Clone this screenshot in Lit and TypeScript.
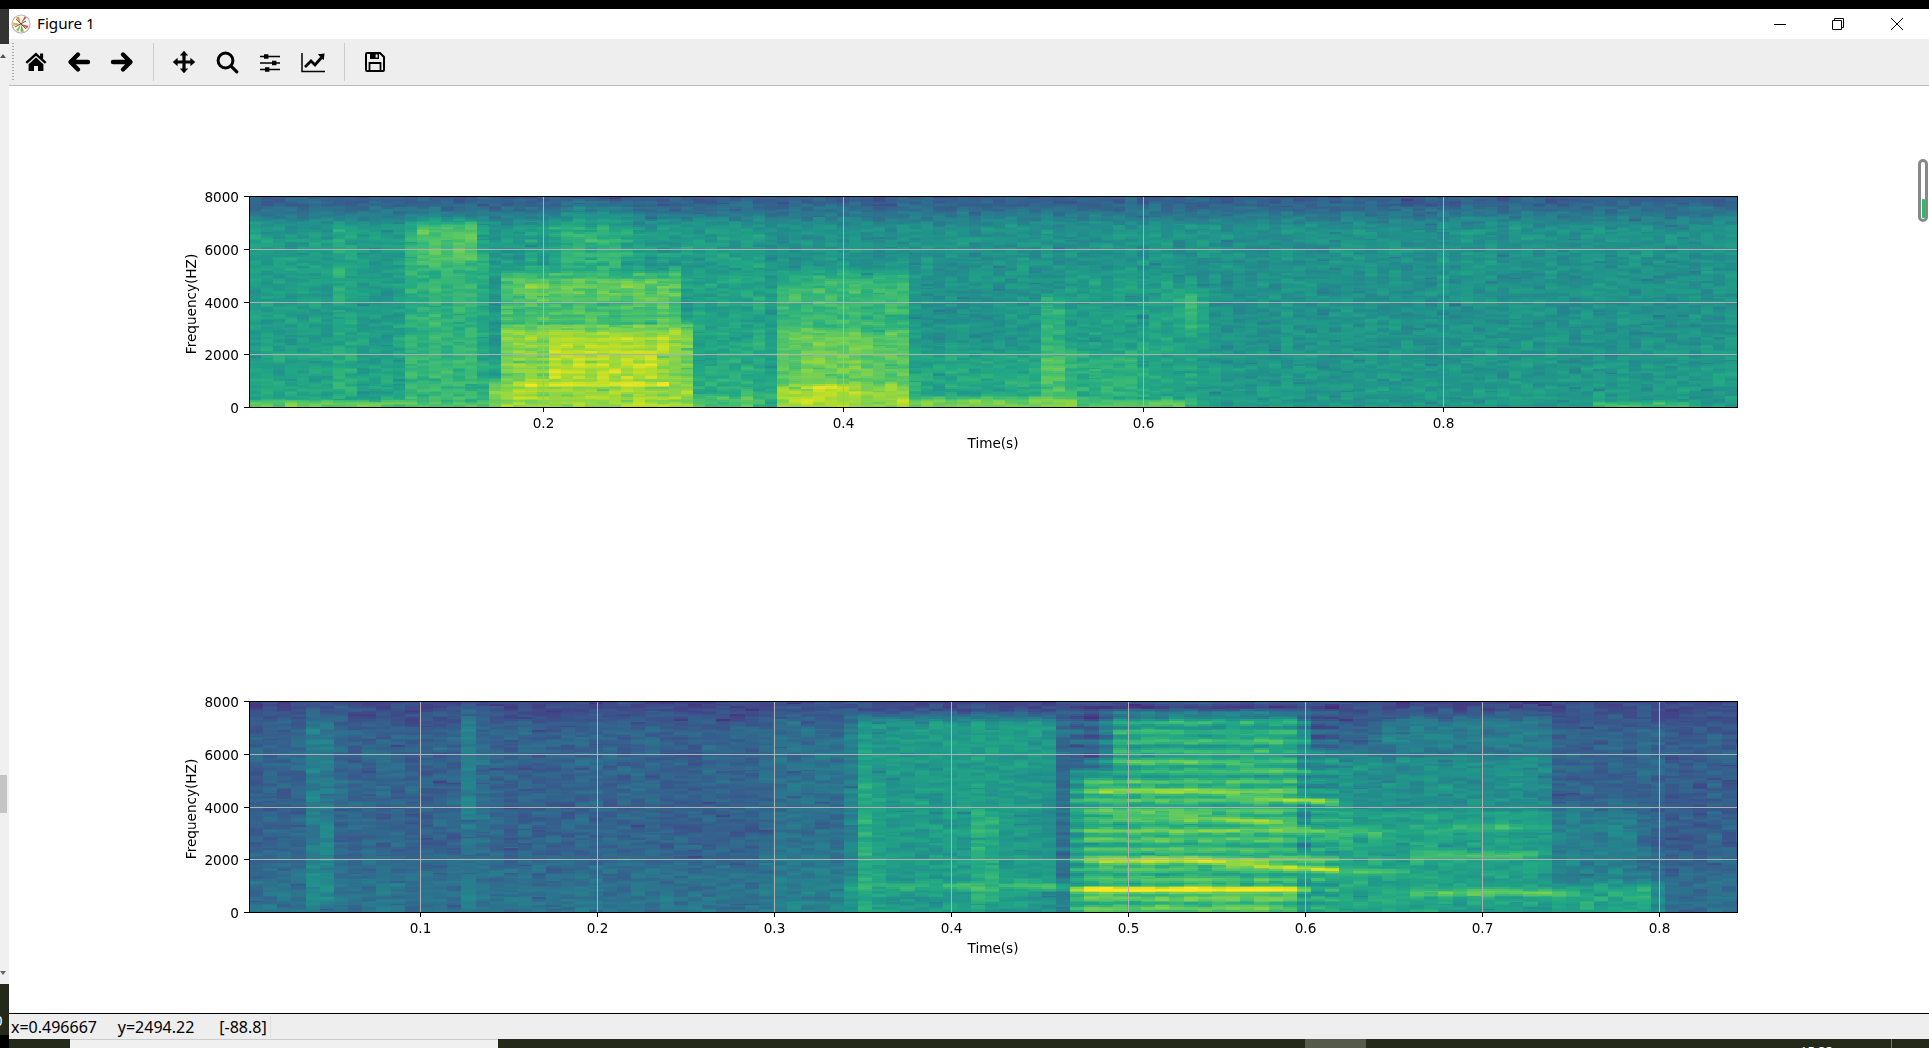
import { LitElement, css, html, svg } from "lit";
import { customElement, property } from "lit/decorators.js";

interface Region {
  t: [number, number];
  f: [number, number];
  add?: number;
  to?: number;
}

interface Band {
  t: [number, number];
  f: number;
  w: number;
  to: number;
  bend?: number;
}

interface PlotSpec {
  seed: number;
  base: number;
  top: number;
  low: number;
  colWidth: number;
  columns: number;
  xScale: number;
  xOffset: number;
  xTicks: number[];
  regions: Region[];
  bands: Band[];
  ripple: { t: [number, number]; period: number; amp: number };
}

const PLOT_A: PlotSpec = {
  seed: 11,
  base: 0.51,
  top: 0.21,
  low: 0.03,
  colWidth: 12,
  columns: 125,
  xScale: 1500,
  xOffset: -6,
  xTicks: [0.2, 0.4, 0.6, 0.8],
  regions: [
    { t: [0.0, 0.35], f: [0, 7000], add: 0.04 },
    { t: [0.062, 0.072], f: [300, 7200], add: 0.09 },
    { t: [0.108, 0.16], f: [0, 7300], add: 0.09 },
    { t: [0.115, 0.155], f: [5400, 7000], add: 0.09 },
    { t: [0.21, 0.255], f: [4500, 7800], add: 0.1 },
    { t: [0.172, 0.292], f: [0, 5200], to: 0.7 },
    { t: [0.18, 0.292], f: [3900, 5000], to: 0.76 },
    { t: [0.172, 0.3], f: [500, 3200], to: 0.82 },
    { t: [0.2, 0.285], f: [800, 3000], to: 0.89 },
    { t: [0.164, 0.3], f: [0, 1000], to: 0.85 },
    { t: [0.18, 0.29], f: [600, 1100], to: 0.94 },
    { t: [0.292, 0.345], f: [0, 500], to: 0.68 },
    { t: [0.355, 0.445], f: [0, 5100], to: 0.67 },
    { t: [0.355, 0.445], f: [0, 3100], to: 0.75 },
    { t: [0.365, 0.42], f: [1000, 2200], to: 0.79 },
    { t: [0.355, 0.445], f: [0, 1000], to: 0.86 },
    { t: [0.37, 0.41], f: [550, 900], to: 0.93 },
    { t: [0.445, 0.56], f: [0, 320], to: 0.78 },
    { t: [0.56, 0.63], f: [0, 220], to: 0.68 },
    { t: [0.445, 0.6], f: [400, 2100], add: 0.06 },
    { t: [0.532, 0.548], f: [300, 4200], add: 0.15 },
    { t: [0.55, 0.64], f: [0, 5000], add: 0.05 },
    { t: [0.625, 0.64], f: [2700, 4300], add: 0.11 },
    { t: [0.9, 0.97], f: [0, 160], to: 0.68 },
    { t: [0.0, 0.1], f: [0, 220], to: 0.76 },
    { t: [0.1, 0.17], f: [0, 220], to: 0.72 },
    { t: [0.3, 0.35], f: [0, 5000], add: 0.03 },
  ],
  bands: [],
  ripple: { t: [0.17, 0.3], period: 250, amp: 0.025 },
};

const PLOT_B: PlotSpec = {
  seed: 29,
  base: 0.32,
  top: 0.09,
  low: 0.06,
  colWidth: 14.16,
  columns: 106,
  xScale: 1770.5,
  xOffset: -6.5,
  xTicks: [0.1, 0.2, 0.3, 0.4, 0.5, 0.6, 0.7, 0.8],
  regions: [
    { t: [0.036, 0.052], f: [300, 7500], add: 0.12 },
    { t: [0.125, 0.134], f: [3400, 7800], add: 0.14 },
    { t: [0.125, 0.135], f: [0, 3400], add: 0.04 },
    { t: [0.3, 0.345], f: [0, 8000], add: 0.05 },
    { t: [0.335, 0.345], f: [0, 1200], to: 0.55 },
    { t: [0.345, 0.46], f: [0, 7400], to: 0.55 },
    { t: [0.345, 0.358], f: [0, 5000], add: 0.06 },
    { t: [0.415, 0.425], f: [300, 3800], add: 0.12 },
    { t: [0.49, 0.6], f: [0, 7500], to: 0.6 },
    { t: [0.47, 0.6], f: [0, 5300], to: 0.66 },
    { t: [0.47, 0.6], f: [0, 1300], to: 0.7 },
    { t: [0.47, 0.62], f: [1700, 2300], to: 0.74 },
    { t: [0.6, 0.74], f: [0, 6000], to: 0.5 },
    { t: [0.6, 0.74], f: [0, 4000], to: 0.58 },
    { t: [0.64, 0.74], f: [6000, 7400], to: 0.42 },
    { t: [0.74, 0.8], f: [0, 1100], to: 0.6 },
    { t: [0.74, 0.79], f: [1100, 4000], to: 0.44 },
    { t: [0.8, 0.86], f: [0, 8000], add: -0.02 },
  ],
  bands: [
    { t: [0.345, 0.465], f: 950, w: 170, to: 0.68 },
    { t: [0.47, 0.6], f: 800, w: 130, to: 0.97 },
    { t: [0.48, 0.62], f: 1900, w: 120, to: 0.9, bend: -250 },
    { t: [0.48, 0.62], f: 3000, w: 150, to: 0.74 },
    { t: [0.49, 0.6], f: 3650, w: 130, to: 0.81, bend: -450 },
    { t: [0.48, 0.62], f: 4600, w: 170, to: 0.78, bend: -350 },
    { t: [0.49, 0.6], f: 5700, w: 140, to: 0.7, bend: -350 },
    { t: [0.5, 0.6], f: 6600, w: 130, to: 0.68 },
    { t: [0.66, 0.75], f: 700, w: 140, to: 0.78 },
    { t: [0.66, 0.73], f: 2100, w: 150, to: 0.72 },
    { t: [0.68, 0.74], f: 3200, w: 130, to: 0.67 },
    { t: [0.6, 0.66], f: 1500, w: 140, to: 0.7 },
    { t: [0.6, 0.65], f: 3000, w: 140, to: 0.68 },
  ],
  ripple: { t: [0.465, 0.62], period: 375, amp: 0.07 },
};

const VIRIDIS = [
  [68, 1, 84],
  [72, 36, 117],
  [65, 68, 135],
  [53, 95, 141],
  [42, 120, 142],
  [33, 145, 140],
  [34, 168, 132],
  [68, 191, 112],
  [122, 209, 81],
  [189, 223, 38],
  [253, 231, 37],
];

function viridis(v: number) {
  const x = Math.min(0.9999, Math.max(0, v)) * 10;
  const i = Math.floor(x);
  const k = x - i;
  const c = VIRIDIS[i].map((a, n) => Math.round(a + (VIRIDIS[i + 1][n] - a) * k));
  return `rgb(${c[0]},${c[1]},${c[2]})`;
}

function rng(seed: number) {
  let s = seed * 2654435761;
  return () => {
    s = (s + 0x6d2b79f5) | 0;
    let r = Math.imul(s ^ (s >>> 15), 1 | s);
    r = (r + Math.imul(r ^ (r >>> 7), 61 | r)) ^ r;
    return ((r ^ (r >>> 14)) >>> 0) / 4294967296;
  };
}

const ramp = (a: number, b: number, x: number) => {
  const k = Math.min(1, Math.max(0, (x - a) / (b - a)));
  return k * k * (3 - 2 * k);
};

const box = (a: number, b: number, soft: number, x: number) =>
  ramp(a - soft, a + soft, x) * (1 - ramp(b - soft, b + soft, x));

function freqMask(f0: number, f1: number, f: number) {
  const soft = Math.min(380, (f1 - f0) / 2);
  const lower = f0 <= 0 ? 1 : ramp(f0 - soft, f0 + soft, f);
  return lower * (1 - ramp(f1 - soft, f1 + soft, f));
}

function cellValue(spec: PlotSpec, t: number, f: number) {
  const start = spec.base + spec.low * (1 - ramp(500, 3000, f)) - spec.top * ramp(6600, 8000, f);
  let v = start;
  for (const r of spec.regions) {
    const mask = box(r.t[0], r.t[1], 0.007, t) * freqMask(r.f[0], r.f[1], f);
    if (r.add !== undefined) v += r.add * mask;
    if (r.to !== undefined) v = Math.max(v, start + (r.to - start) * mask);
  }
  for (const b of spec.bands) {
    const centre = b.f + (b.bend ?? 0) * Math.max(0, t - 0.54) / 0.06;
    const d = (f - centre) / b.w;
    const mask = box(b.t[0], b.t[1], 0.008, t) * Math.exp(-d * d);
    v = Math.max(v, v + (b.to - v) * mask);
  }
  const rip = box(spec.ripple.t[0], spec.ripple.t[1], 0.006, t);
  v += rip * spec.ripple.amp * Math.sin((2 * Math.PI * f) / spec.ripple.period);
  return v;
}

@customElement("spectro-axes")
export class SpectroAxes extends LitElement {
  static styles = css`
    :host { display: block; width: 1489px; height: 212px; }
    .axes { position: relative; width: 1489px; height: 212px; }
    canvas { display: block; }
    svg { position: absolute; top: 0; left: 0; overflow: visible; }
    text { font-family: "DejaVu Sans", sans-serif; font-size: 13.6px; fill: #000; }
  `;

  @property({ attribute: false }) spec: PlotSpec = PLOT_A;

  firstUpdated() {
    const canvas = this.renderRoot.querySelector("canvas") as HTMLCanvasElement;
    const ctx = canvas.getContext("2d") as CanvasRenderingContext2D;
    const spec = this.spec;
    const rand = rng(spec.seed);
    const rows = 129;
    const rowH = 211 / rows;
    for (let c = 0; c < spec.columns; c++) {
      const t = 0.004 + (c + 0.5) * 0.008;
      const colNoise = (rand() - 0.5) * 0.025;
      const x0 = Math.round(c * spec.colWidth);
      const x1 = Math.round((c + 1) * spec.colWidth);
      // neighbouring bins leak into each other, so the grain is a few rows tall
      const raw = Array.from({ length: rows + 2 }, () => rand() - 0.5);
      for (let r = 0; r < rows; r++) {
        const f = (rows - 1 - r) * 62.5;
        let n = (raw[r] * 0.25 + raw[r + 1] * 0.5 + raw[r + 2] * 0.25) * 0.17;
        if (rand() < 0.025) n -= 0.06;
        ctx.fillStyle = viridis(cellValue(spec, t, f) + n + colNoise);
        const y0 = Math.round(r * rowH);
        ctx.fillRect(x0, y0, x1 - x0, Math.round((r + 1) * rowH) - y0);
      }
    }
  }

  render() {
    const { xTicks, xScale, xOffset } = this.spec;
    const yTicks = [8000, 6000, 4000, 2000, 0];
    const yOf = (v: number) => Math.round(((8000 - v) / 8000) * 211) + 0.5;
    const xOf = (t: number) => Math.round(xScale * t + xOffset) + 0.5;
    return html`
      <div class="axes">
        <canvas width="1489" height="212"></canvas>
        <svg width="1489" height="212" viewBox="0 0 1489 212">
          ${xTicks.map((t) => svg`
            <line x1=${xOf(t)} x2=${xOf(t)} y1="0" y2="211" stroke="#b0b0b0"></line>
            <line x1=${xOf(t)} x2=${xOf(t)} y1="211" y2="216" stroke="#000"></line>
            <text x=${xOf(t)} y="232" text-anchor="middle">${t.toFixed(1)}</text>
          `)}
          ${yTicks.map((v) => svg`
            ${v > 0 && v < 8000 ? svg`<line x1="0" x2="1488" y1=${yOf(v)} y2=${yOf(v)} stroke="#b0b0b0"></line>` : ""}
            <line x1="-5" x2="0" y1=${yOf(v)} y2=${yOf(v)} stroke="#000"></line>
            <text x="-10" y=${yOf(v) + 5} text-anchor="end">${v}</text>
          `)}
          <rect x="0.5" y="0.5" width="1488" height="211" fill="none" stroke="#000"></rect>
          <text x="744" y="252" text-anchor="middle">Time(s)</text>
          <text transform="translate(-53 108) rotate(-90)" text-anchor="middle">Frequency(HZ)</text>
        </svg>
      </div>
    `;
  }
}

const icons = {
  home: svg`<path d="M12 2.5 1.5 12l1.6 1.7L12 5.8l8.9 7.9 1.6-1.7-3.4-3.1V3.5h-3v2.9z"/><path d="M12 7.6 4.6 14.2V21H10v-5h4v5h5.4v-6.8z"/>`,
  back: svg`<path d="M11 4.5 3.5 12l7.5 7.5M4 12h17" fill="none" stroke="#000" stroke-width="4.4" stroke-linejoin="round" stroke-linecap="round"/>`,
  forward: svg`<path d="M13 4.5 20.5 12 13 19.5M20 12H3" fill="none" stroke="#000" stroke-width="4.4" stroke-linejoin="round" stroke-linecap="round"/>`,
  move: svg`<path d="M12 .8 16.2 5.6H13.6v4.8h4.8V7.8L23.2 12l-4.8 4.2v-2.6h-4.8v4.8h2.6L12 23.2l-4.2-4.8h2.6v-4.8H5.6v2.6L.8 12l4.8-4.2v2.6h4.8V5.6H7.8z"/>`,
  zoom: svg`<circle cx="10.5" cy="10.5" r="7.4" fill="none" stroke="#000" stroke-width="3"/><path d="m15.8 15.8 6 6" stroke="#000" stroke-width="3.2" stroke-linecap="round"/>`,
  sliders: svg`<path d="M2 6.5h20M2 13h20M2 19.5h20" stroke="#000" stroke-width="1.6"/><path d="M6 4.2h4.4v4.6H6zM14 10.7h4.4v4.6H14zM7 17.2h4.4v4.6H7z"/>`,
  chart: svg`<path d="M1 3v18.6h23" fill="none" stroke="#000" stroke-width="1.5"/><path d="m4 17 6-6 4 4 6.5-7.5" fill="none" stroke="#000" stroke-width="2.8"/><path d="M16.8 4.2 23.6 3.4l-.9 6.8z"/>`,
  save: svg`<path d="M4 3h13l4 4v13a1 1 0 0 1-1 1H4a1 1 0 0 1-1-1V4a1 1 0 0 1 1-1z" fill="none" stroke="#000" stroke-width="2"/><path d="M7 3h9v6H7z"/><path d="M12.6 4.4h2v3.2h-2z" fill="#eee"/><path d="M6.5 20.5V13h11v7.5" fill="none" stroke="#000" stroke-width="1.8"/>`,
};

@customElement("app-root")
export class AppRoot extends LitElement {
  static styles = css`
    :host { display: block; width: 1929px; height: 1048px; overflow: hidden; background: #fff; }
    .page { display: flex; width: 1929px; height: 1048px; }

    .strip { width: 9px; flex: none; display: flex; flex-direction: column; background: #f0f0f0; }
    .strip .cap { height: 9px; background: #000; }
    .strip .dark { height: 35px; background: #333; }
    .strip .rail { height: 940px; display: flex; flex-direction: column; }
    .strip .chev { width: 0; height: 0; border: 3px solid transparent; }
    .strip .chev.up { border-top: 0; border-bottom: 4px solid #555; margin-top: 10px; }
    .strip .thumb { width: 7px; height: 38px; background: #c4c4c4; margin-top: 717px; }
    .strip .chev.down { border-bottom: 0; border-top: 4px solid #666; margin-top: 158px; }
    .strip .task { height: 51px; background: #25291a; color: #fff; overflow: hidden;
      font: 15px "Noto Sans", sans-serif; line-height: 20px; padding-top: 26px; box-sizing: border-box; text-indent: -6px; }
    .strip .foot { height: 13px; background: #000; }

    .main { flex: 1; min-width: 0; display: flex; flex-direction: column; position: relative; }
    .cap { height: 9px; background: #000; flex: none; }
    .shadow { position: absolute; left: 0; top: 9px; width: 366px; height: 5px;
      background: linear-gradient(#d4d4d4, #fff); }

    .title { height: 30px; flex: none; display: flex; align-items: center; background: #fff; position: relative; }
    .title .logo { width: 20px; height: 20px; margin-left: 2px; flex: none; }
    .title .name { font: 15.2px/20px "Noto Sans", sans-serif; color: #000; margin: 0 0 2px 6px; flex: 1; }
    .winbtn { width: 58.5px; display: flex; justify-content: center; flex: none; }
    .winbtn svg { width: 14px; height: 14px; display: block; }
    .winctl { display: flex; margin-right: 3px; }

    .toolbar { height: 46px; flex: none; box-sizing: content-box; display: flex; align-items: center;
      background: #eee; border-bottom: 1px solid #bbb; }
    .grip { width: 2px; height: 38px; margin: 0 0 0 3px; flex: none;
      background: repeating-linear-gradient(#aaa 0 1px, transparent 1px 3px); }
    .tool { width: 43px; height: 46px; display: flex; align-items: center; justify-content: center; flex: none; }
    .tool svg { width: 24px; height: 24px; display: block; }
    .sep { width: 1px; height: 38px; background: #ccc; margin: 0 8px 0 10px; flex: none; }

    .figure { flex: 1; display: flex; flex-direction: column; gap: 293px; padding: 110px 0 0 240px;
      background: #fff; position: relative; min-height: 0; }
    .pill { position: absolute; right: 1px; top: 73px; width: 10px; height: 63px; box-sizing: border-box;
      border: 3px solid #888; border-radius: 5px; background: #fff; display: flex; align-items: flex-end; justify-content: center;
      padding-bottom: 1px; }
    .pill i { display: block; width: 3px; height: 19px; background: #2dbb6b; border-radius: 1px; }

    .status { height: 25px; flex: none; display: flex; align-items: center; background: #eee;
      border-top: 1px solid #000; font: 16px "Noto Sans", sans-serif; color: #000; padding-left: 2px; }
    .status span { white-space: pre; padding-right: 3px; border-right: 1px solid #ddd; line-height: 22px; }

    .taskbar { height: 9px; flex: none; display: flex; background: #25291a; overflow: hidden; position: relative; }
    .taskbar .app { width: 428px; margin-left: 61px; background: #f0f0f0; border-top: 1px solid #ccc; box-sizing: border-box; flex: none; }
    .taskbar .active { width: 61px; margin-left: 807px; background: #555a4a; flex: none; }
    .taskbar .clock { margin-left: 434px; width: 40px; color: #fff; flex: none; white-space: nowrap;
      font: 13px/13px "Noto Sans", sans-serif; padding-top: 6px; }
    .taskbar .edge { width: 1px; margin-left: 51px; background: #777; flex: none; }
  `;

  private _tool(icon: unknown) {
    return html`<div class="tool"><svg viewBox="0 0 24 24" aria-hidden="true">${icon}</svg></div>`;
  }

  render() {
    return html`
      <div class="page">
        <div class="strip">
          <div class="cap"></div>
          <div class="dark"></div>
          <div class="rail">
            <div class="chev up"></div>
            <div class="thumb"></div>
            <div class="chev down"></div>
          </div>
          <div class="task">0</div>
          <div class="foot"></div>
        </div>
        <div class="main">
          <div class="cap"></div>
          <div class="shadow"></div>
          <div class="title">
            <svg class="logo" viewBox="0 0 20 20" aria-hidden="true">
              <circle cx="10" cy="10" r="9" fill="#fff" stroke="#b5b5b5" stroke-width="1.2"></circle>
              <path d="M10 10 5 3.5 8 2.5z" fill="#e8912c"></path>
              <path d="M10 10 2 8.5 2.5 12z" fill="#e8b23a"></path>
              <path d="M10 10 15.5 3.5 13.5 2.5z" fill="#d9562b"></path>
              <path d="M10 10 16 14.5 17.5 12z" fill="#d9562b"></path>
              <path d="M10 10 13 17.5 9.5 18z" fill="#7fb24a"></path>
              <path d="M10 10 5 16 7.5 17.5z" fill="#9ab86a"></path>
              <path d="M5 5 15 15M4 13 15 7" stroke="#333" stroke-width=".8"></path>
            </svg>
            <span class="name">Figure 1</span>
            <div class="winctl">
              <div class="winbtn">
                <svg viewBox="0 0 14 14"><path d="M1 7.5h12" stroke="#000" stroke-width="1"></path></svg>
              </div>
              <div class="winbtn">
                <svg viewBox="0 0 14 14"><path d="M3.5 3V1.5h9v9H11M1.5 3.5h9v9h-9z" fill="none" stroke="#000" stroke-width="1"></path></svg>
              </div>
              <div class="winbtn">
                <svg viewBox="0 0 14 14"><path d="M1 1l12 12M13 1 1 13" stroke="#000" stroke-width="1"></path></svg>
              </div>
            </div>
          </div>
          <div class="toolbar">
            <div class="grip"></div>
            ${this._tool(icons.home)}
            ${this._tool(icons.back)}
            ${this._tool(icons.forward)}
            <div class="sep"></div>
            ${this._tool(icons.move)}
            ${this._tool(icons.zoom)}
            ${this._tool(icons.sliders)}
            ${this._tool(icons.chart)}
            <div class="sep"></div>
            ${this._tool(icons.save)}
          </div>
          <div class="figure">
            <spectro-axes .spec=${PLOT_A}></spectro-axes>
            <spectro-axes .spec=${PLOT_B}></spectro-axes>
            <div class="pill"><i></i></div>
          </div>
          <div class="status"><span>x=0.496667     y=2494.22      [-88.8]</span></div>
          <div class="taskbar">
            <div class="app"></div>
            <div class="active"></div>
            <div class="clock">15:33</div>
            <div class="edge"></div>
          </div>
        </div>
      </div>
    `;
  }
}
